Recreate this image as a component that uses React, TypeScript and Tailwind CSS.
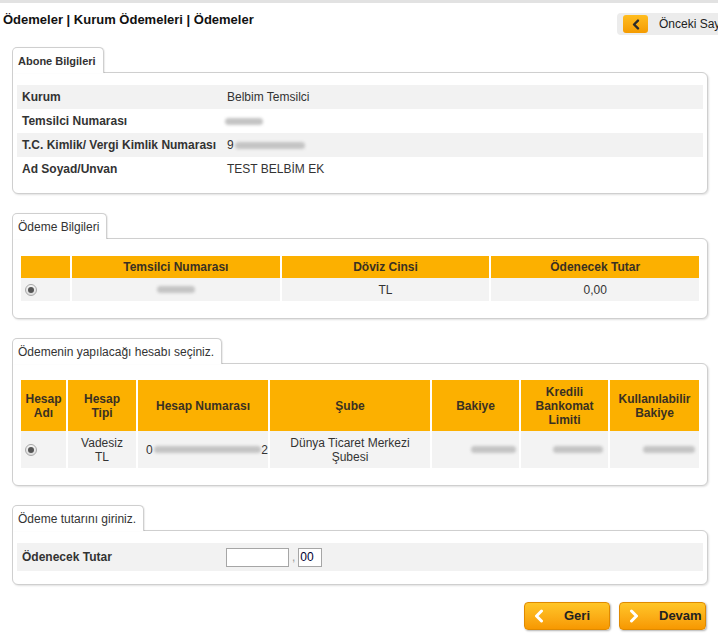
import React from 'react';

const font = { fontFamily: '"Liberation Sans", Arial, sans-serif' };

function Blur({ w, className = '' }: { w: number; className?: string }) {
  return (
    <span
      className={`inline-block h-[7px] rounded-full bg-[#c4c4c4] blur-[1.5px] align-middle ${className}`}
      style={{ width: w }}
    />
  );
}

function Radio() {
  return (
    <span className="inline-flex h-[12px] w-[12px] items-center justify-center rounded-full border border-[#a9a9a9] bg-gradient-to-b from-[#f4f4f4] to-[#dcdcdc]">
      <span className="h-[6px] w-[6px] rounded-full bg-[#555]" />
    </span>
  );
}

function Panel({ title, bold, children }: { title: string; bold?: boolean; children: React.ReactNode }) {
  return (
    <div className="ml-[12px] mr-[10px] flex flex-col items-start">
      <div
        className={`relative z-10 -mb-px h-[26px] rounded-t-[5px] border border-b-0 border-[#cfcfcf] bg-white pl-[5px] pr-[7px] shadow-[1px_0_1px_rgba(0,0,0,0.08)] ${
          bold ? 'pt-[7px] text-[11px] font-bold leading-[13px]' : 'pt-[6px] text-[12px] leading-[14px]'
        } text-[#333]`}
      >
        {title}
      </div>
      <div className="w-full rounded-b-[6px] rounded-tr-[6px] border border-[#cfcfcf] bg-white shadow-[1px_1px_2px_rgba(0,0,0,0.12)]">
        {children}
      </div>
    </div>
  );
}

function ArrowLeft({ className = '' }: { className?: string }) {
  return (
    <svg viewBox="0 0 10 14" className={className} fill="none" stroke="currentColor" strokeWidth="3" strokeLinecap="round" strokeLinejoin="round">
      <path d="M7.5 2 L2.5 7 L7.5 12" />
    </svg>
  );
}

function ArrowRight({ className = '' }: { className?: string }) {
  return (
    <svg viewBox="0 0 10 14" className={className} fill="none" stroke="currentColor" strokeWidth="3" strokeLinecap="round" strokeLinejoin="round">
      <path d="M2.5 2 L7.5 7 L2.5 12" />
    </svg>
  );
}

export default function App() {
  const aboneRows = [
    { label: 'Kurum', value: <span>Belbim Temsilci</span> },
    { label: 'Temsilci Numarası', value: <Blur w={38} className="-ml-[2px]" /> },
    {
      label: 'T.C. Kimlik/ Vergi Kimlik Numarası',
      value: (
        <span className="flex items-center">
          9<Blur w={70} className="ml-[1px]" />
        </span>
      ),
    },
    { label: 'Ad Soyad/Unvan', value: <span>TEST BELBİM EK</span> },
  ];

  return (
    <div className="min-h-screen w-[718px] overflow-hidden bg-white text-[12px] text-[#333]" style={font}>
      <div className="h-[3px] bg-[#e2e2e2]" />

      <div className="flex h-[44px] items-start">
        <h1 className="flex-1 pl-[3px] pt-[9px] text-[13px] font-bold leading-[15px] text-[#111]">
          Ödemeler | Kurum Ödemeleri | Ödemeler
        </h1>
        <div className="mt-[10px] flex h-[22px] w-[101px] shrink-0 items-center overflow-hidden whitespace-nowrap rounded-l-[4px] bg-[#ececec] pl-[6px]">
          <span className="flex h-[18px] w-[25px] shrink-0 items-center justify-center rounded-[3px] bg-gradient-to-b from-[#ffbd1f] to-[#f49b00] text-[#2b2b2b]">
            <ArrowLeft className="h-[11px] w-[8px]" />
          </span>
          <span className="ml-[11px] text-[12px] text-[#222]">Önceki Sayfa</span>
        </div>
      </div>

      <div className="flex flex-col gap-[19px]">
        <Panel title="Abone Bilgileri" bold>
          <div className="px-[4px] pb-[12px] pt-[12px]">
            {aboneRows.map((r, i) => (
              <div key={r.label} className={`flex h-[24px] items-center ${i % 2 === 0 ? 'bg-[#f2f2f2]' : ''}`}>
                <div className="w-[210px] pl-[5px] font-bold">{r.label}</div>
                <div className="flex-1">{r.value}</div>
              </div>
            ))}
          </div>
        </Panel>

        <Panel title="Ödeme Bilgileri">
          <div className="px-[8px] pb-[17px] pt-[17px]">
            <div className="grid grid-cols-[49px_1fr_1fr_1fr] gap-x-[2px]">
              <div className="h-[22px] bg-[#fcb000]" />
              <div className="flex h-[22px] items-center justify-center bg-[#fcb000] font-bold text-[#3a3022]">Temsilci Numarası</div>
              <div className="flex h-[22px] items-center justify-center bg-[#fcb000] font-bold text-[#3a3022]">Döviz Cinsi</div>
              <div className="flex h-[22px] items-center justify-center bg-[#fcb000] font-bold text-[#3a3022]">Ödenecek Tutar</div>
              <div className="flex h-[23px] items-center bg-[#f3f3f3] pl-[4px]">
                <Radio />
              </div>
              <div className="flex h-[23px] items-center justify-center bg-[#f3f3f3]">
                <Blur w={38} />
              </div>
              <div className="flex h-[23px] items-center justify-center bg-[#f3f3f3]">TL</div>
              <div className="flex h-[23px] items-center justify-center bg-[#f3f3f3]">0,00</div>
            </div>
          </div>
        </Panel>

        <Panel title="Ödemenin yapılacağı hesabı seçiniz.">
          <div className="px-[8px] pb-[17px] pt-[16px]">
            <div className="grid grid-cols-[45px_68px_130px_160px_87px_87px_1fr] gap-x-[2px] text-center">
              {['Hesap Adı', 'Hesap Tipi', 'Hesap Numarası', 'Şube', 'Bakiye', 'Kredili Bankomat Limiti', 'Kullanılabilir Bakiye'].map(
                (h) => (
                  <div key={h} className="flex h-[51px] items-center justify-center bg-[#fcb000] px-[6px] font-bold leading-[14px] text-[#3a3022]">
                    {h}
                  </div>
                ),
              )}
              <div className="flex h-[37px] items-center bg-[#f3f3f3] pl-[4px]">
                <Radio />
              </div>
              <div className="flex h-[37px] items-center justify-center bg-[#f3f3f3] leading-[14px]">
                Vadesiz
                <br />
                TL
              </div>
              <div className="flex h-[37px] items-center bg-[#f3f3f3] pl-[8px]">
                0<Blur w={108} className="ml-[1px]" />2
              </div>
              <div className="flex h-[37px] items-center justify-center bg-[#f3f3f3] leading-[14px]">
                Dünya Ticaret Merkezi
                <br />
                Şubesi
              </div>
              <div className="flex h-[37px] items-center justify-end bg-[#f3f3f3] pr-[3px]">
                <Blur w={45} />
              </div>
              <div className="flex h-[37px] items-center justify-end bg-[#f3f3f3] pr-[5px]">
                <Blur w={50} />
              </div>
              <div className="flex h-[37px] items-center justify-end bg-[#f3f3f3] pr-[4px]">
                <Blur w={52} />
              </div>
            </div>
          </div>
        </Panel>

        <Panel title="Ödeme tutarını giriniz.">
          <div className="px-[4px] pb-[13px] pt-[12px]">
            <div className="flex h-[28px] items-center bg-[#f2f2f2]">
              <div className="w-[209px] pl-[5px] font-bold">Ödenecek Tutar</div>
              <div className="h-[19px] w-[63px] border border-[#a6a6a6] bg-white" />
              <span className="mx-[3px] text-[#999]">,</span>
              <div className="flex h-[19px] w-[24px] items-center border border-[#a6a6a6] bg-white pl-[1px] text-[12px] text-[#000033]">
                00
              </div>
            </div>
          </div>
        </Panel>
      </div>

      <div className="mr-[12px] mt-[17px] flex justify-end gap-[9px]">
        <button className="flex h-[28px] w-[86px] items-center rounded-[4px] border border-[#e08a00] bg-gradient-to-b from-[#ffc627] to-[#f79800] pl-[9px] shadow-[1px_1px_2px_rgba(0,0,0,0.3)]">
          <ArrowLeft className="h-[14px] w-[10px] text-white" />
          <span className="ml-[20px] text-[13px] font-bold text-[#222]">Geri</span>
        </button>
        <button className="flex h-[28px] w-[87px] items-center rounded-[4px] border border-[#e08a00] bg-gradient-to-b from-[#ffc627] to-[#f79800] pl-[9px] shadow-[1px_1px_2px_rgba(0,0,0,0.3)]">
          <ArrowRight className="h-[14px] w-[10px] text-white" />
          <span className="ml-[20px] text-[13px] font-bold text-[#222]">Devam</span>
        </button>
      </div>
    </div>
  );
}
